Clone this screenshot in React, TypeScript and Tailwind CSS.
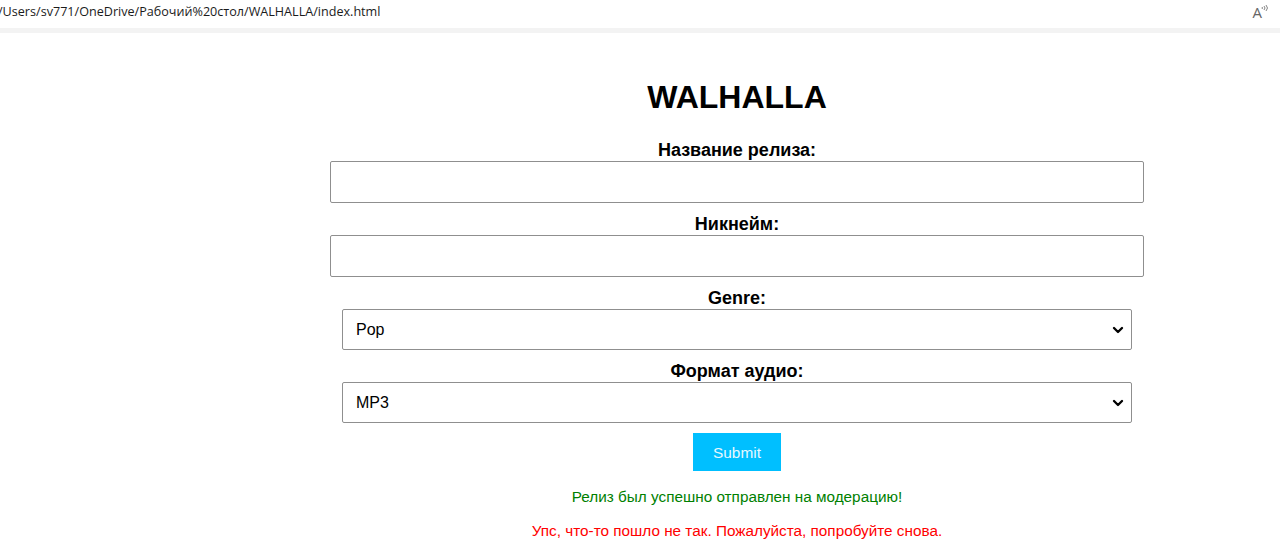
import { ChevronDown } from "lucide-react";

const fieldLabel = "text-[18px] font-bold leading-[21px] text-black";

function TextField({ label }: { label: string }) {
  return (
    <>
      <label className={fieldLabel}>{label}</label>
      <input
        type="text"
        className="h-[42px] w-[814px] rounded-[2px] border border-[#8f8f8f] bg-white px-2 outline-none"
      />
    </>
  );
}

function SelectField({ label, value }: { label: string; value: string }) {
  return (
    <>
      <label className={fieldLabel}>{label}</label>
      <div className="relative h-[41px] w-[790px] rounded-[2px] border border-[#8f8f8f] bg-white">
        <span className="absolute left-[13px] top-[10px] text-[16px] leading-[19px] text-black">{value}</span>
        <ChevronDown className="absolute right-[5px] top-[12px] h-[16px] w-[16px] text-black" strokeWidth={3.5} />
      </div>
    </>
  );
}

export default function App() {
  return (
    <div className="min-h-[559px] w-[1280px] bg-white font-['Liberation_Sans',Arial,sans-serif]">
      <header className="flex h-[28px] items-center justify-between pb-[4px] pr-[12px]">
        <span className="-ml-[2px] whitespace-nowrap font-['Open_Sans',sans-serif] text-[12.6px] leading-[18px] text-[#1b1b1b]">
          /Users/sv771/OneDrive/Рабочий%20стол/WALHALLA/index.html
        </span>
        <span className="flex items-start font-['Open_Sans',sans-serif] text-[15px] leading-none text-[#666]">
          A
          <svg width="7" height="8" viewBox="0 0 7 8" className="-ml-[1px] mt-[-1px]">
            <path d="M1 5 Q2 4 1 3 M3 6 Q5 4 3 2 M5 7 Q8 4 5 1" stroke="#777" strokeWidth="0.9" fill="none" />
          </svg>
        </span>
      </header>
      <div className="h-[5px] bg-[#f3f3f3]" />
      <main className="flex flex-col items-center pl-[194px] pt-[46px]">
        <h1 className="text-[32px] font-bold leading-[37px] text-black">WALHALLA</h1>
        <form className="mt-[24px] flex flex-col items-center">
          <TextField label="Название релиза:" />
          <div className="h-[11px]" />
          <TextField label="Никнейм:" />
          <div className="h-[11px]" />
          <SelectField label="Genre:" value="Pop" />
          <div className="h-[11px]" />
          <SelectField label="Формат аудио:" value="MP3" />
          <button
            type="button"
            className="mt-[10px] h-[38px] w-[88px] bg-[#00bfff] text-[15.4px] leading-[19px] text-[#e6f8ff]"
          >
            Submit
          </button>
          <p className="mt-[16px] text-[15.3px] leading-[19px] text-[#008000]">
            Релиз был успешно отправлен на модерацию!
          </p>
          <p className="mt-[15px] text-[15.3px] leading-[19px] text-[#ff0000]">
            Упс, что-то пошло не так. Пожалуйста, попробуйте снова.
          </p>
        </form>
      </main>
    </div>
  );
}
